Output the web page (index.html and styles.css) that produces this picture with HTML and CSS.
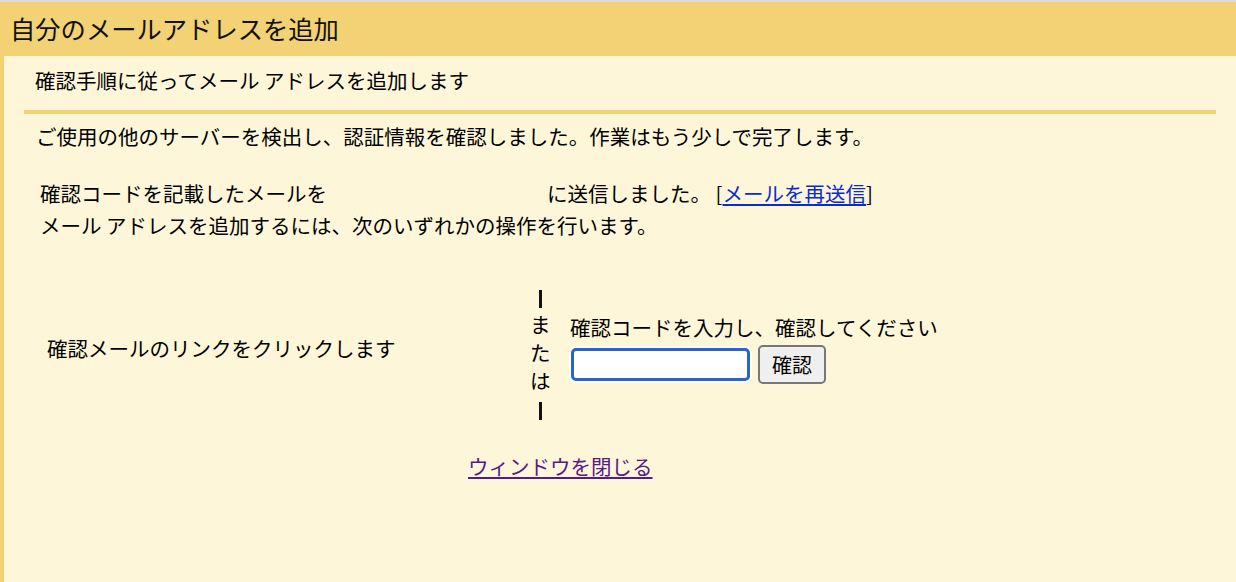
FILE: index.html
```html
<!DOCTYPE html>
<html lang="ja">
<head>
    <meta charset="UTF-8">
    <title>自分のメールアドレスを追加</title>
    <link rel="stylesheet" href="styles.css">
</head>
<body>
    <div class="page">
        <div class="header">自分のメールアドレスを追加</div>

        <div class="panel">
            <div class="subtitle">確認手順に従ってメール アドレスを追加します</div>
            <div class="rule"></div>

            <p class="notice">ご使用の他のサーバーを検出し、認証情報を確認しました。作業はもう少しで完了します。</p>

            <p class="sent">
                確認コードを記載したメールを<span class="address"></span>に送信しました。 [<a href="#" class="resend">メールを再送信</a>]<br>
                メール アドレスを追加するには、次のいずれかの操作を行います。
            </p>

            <div class="choices">
                <div class="choice-link">確認メールのリンクをクリックします</div>
                <div class="choice-or">
                    <span class="bar"></span><br>ま<br>た<br>は<br><span class="bar"></span>
                </div>
                <div class="choice-code">
                    <div class="code-label">確認コードを入力し、確認してください</div>
                    <div class="code-row">
                        <input type="text" class="code-input">
                        <button class="btn">確認</button>
                    </div>
                </div>
            </div>

            <div class="close-row">
                <a href="#" class="close-link">ウィンドウを閉じる</a>
            </div>
        </div>
    </div>
</body>
</html>
```

FILE: styles.css
```css
* {
    box-sizing: border-box;
}

body {
    margin: 0;
    font-family: "Noto Sans CJK JP", sans-serif;
    color: #000;
    background: #f2d274;
}

.page {
    border-top: 2px solid #d9dbdd;
    min-height: 582px;
    display: flex;
    flex-direction: column;
}

.header {
    height: 54px;
    line-height: 52px;
    font-size: 25.3px;
    padding-left: 10px;
    color: #111;
}

.panel {
    flex: 1;
    margin-left: 4px;
    background: #fef6d9;
    font-size: 20.5px;
    line-height: 29px;
}

.subtitle {
    padding: 10px 0 0 31px;
}

.rule {
    height: 4px;
    background: #f2d274;
    margin: 15px 20px 0 20px;
}

.notice {
    margin: 8px 0 0 0;
    padding-left: 32px;
}

.sent {
    margin: 26px 0 0 0;
    padding-left: 36px;
    line-height: 32px;
}

.address {
    display: inline-block;
    width: 220px;
}

.resend {
    color: #0a2bd4;
}

.choices {
    display: grid;
    grid-template-columns: 463px 20px 1fr;
    column-gap: 20px;
    align-items: center;
    margin-top: 41px;
    padding-left: 43px;
}

.choice-link,
.choice-code {
    margin-bottom: 8px;
}

.choice-or {
    text-align: center;
    line-height: 28px;
}

.bar {
    display: inline-block;
    width: 3px;
    height: 18px;
    background: #111;
    vertical-align: middle;
}

.code-row {
    display: flex;
    align-items: center;
    gap: 8px;
    margin-top: 3px;
}

.code-input {
    width: 179px;
    height: 33px;
    margin-left: 1px;
    border: 3px solid #2c63c9;
    border-radius: 5px;
    background: #fff;
    box-shadow: 0 0 0 2px #fff;
    outline: none;
}

.btn {
    height: 39px;
    padding: 0 12px;
    font-family: "Noto Sans CJK JP", sans-serif;
    font-size: 20px;
    color: #000;
    background: #efefef;
    border: 2px solid #777;
    border-radius: 5px;
}

.close-row {
    margin-top: 30px;
    padding-left: 464px;
}

.close-link {
    color: #551a8b;
}
```
